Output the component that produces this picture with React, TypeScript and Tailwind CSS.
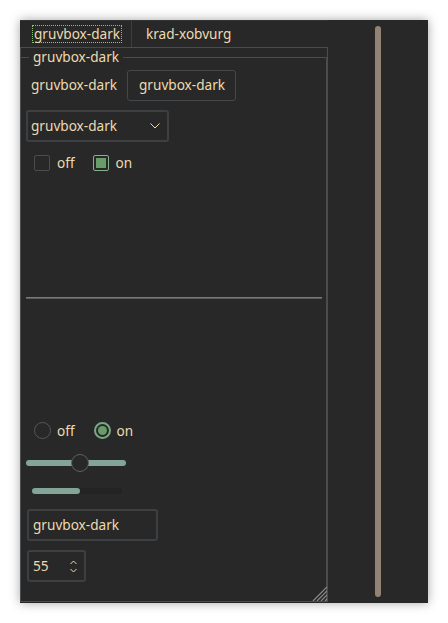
import React from 'react';

const font = { fontFamily: '"Noto Sans", "Open Sans", sans-serif' };

function CheckBox({ checked, label }: { checked?: boolean; label: string }) {
  return (
    <div className="flex items-center h-[16px]">
      <div
        className={`w-[16px] h-[16px] rounded-[2px] border ${
          checked ? 'border-[#83b28a] bg-[#282828] p-[2px]' : 'border-[#4a4d50]'
        }`}
      >
        {checked && <div className="w-full h-full bg-[#689d6a]" />}
      </div>
      <span className="ml-[7px] leading-[16px]">{label}</span>
    </div>
  );
}

function Radio({ checked, label }: { checked?: boolean; label: string }) {
  return (
    <div className="flex items-center h-[17px]">
      <div
        className={`w-[17px] h-[17px] rounded-full flex items-center justify-center ${
          checked ? 'border-2 border-[#79a982]' : 'border-[1.5px] border-[#55585a]'
        }`}
      >
        {checked && <div className="w-[9px] h-[9px] rounded-full bg-[#689d6a]" />}
      </div>
      <span className="ml-[6px] leading-[17px]">{label}</span>
    </div>
  );
}

export default function App() {
  return (
    <div className="w-[448px] h-[623px] bg-white pt-[20px] pl-[20px] text-[13.6px] text-[#ebdbb2]" style={font}>
      <div className="w-[408px] h-[583px] bg-[#282828] shadow-[0_0_10px_rgba(0,0,0,0.35)] flex">
        {/* Left: tabs + pane */}
        <div className="w-[308px] flex flex-col">
          <div className="h-[27px] flex items-stretch border-t border-[#333]">
            <div className="w-[112px] border-r border-[#3e3e3e] flex items-center pl-[12px]">
              <span className="border border-dotted border-[#8ec07c] px-[1px] leading-[16px]">gruvbox-dark</span>
            </div>
            <div className="flex items-center pl-[14px]">krad-xobvurg</div>
          </div>
          <div className="relative flex-1 mb-[1px] border border-[#4a4d50] pt-[9px]">
            <div className="h-full border-t border-r border-[#4a4d50] relative flex flex-col">
              <div className="absolute left-[8px] -top-[10px] px-[4px] bg-[#282828] leading-[18px]">gruvbox-dark</div>

              <div className="mt-[12px] h-[31px] flex items-center">
                <span className="w-[106px] pl-[10px]">gruvbox-dark</span>
                <div className="h-[31px] w-[109px] pl-[11px] flex items-center border border-[#45484b] rounded-[3px]">gruvbox-dark</div>
              </div>

              <div className="mt-[9px] ml-[5px] w-[143px] h-[32px] border-2 border-[#3d4043] rounded-[3px] flex items-center justify-between pl-[3px] pr-[7px]">
                <span>gruvbox-dark</span>
                <svg width="10" height="6" viewBox="0 0 10 6" fill="none" stroke="#ebdbb2" strokeWidth="1">
                  <path d="M0.5 0.5 L5 5 L9.5 0.5" />
                </svg>
              </div>

              <div className="mt-[13px] ml-[13px] flex items-center gap-[18px]">
                <CheckBox label="off" />
                <CheckBox checked label="on" />
              </div>

              <div className="mt-[126px] ml-[5px] w-[296px] h-[2px] bg-[#7a7a7a] border-b border-[#5a5a5a]" />

              <div className="mt-[123px] ml-[13px] flex items-center gap-[19px]">
                <Radio label="off" />
                <Radio checked label="on" />
              </div>

              <div className="mt-[15px] ml-[5px] w-[100px] h-[18px] relative flex items-center">
                <div className="w-full h-[6px] rounded-full bg-[#83a598]" />
                <div className="absolute left-[45px] top-0 w-[18px] h-[18px] rounded-full bg-[#282828] border border-[#5c5f62]" />
              </div>

              <div className="mt-[16px] ml-[11px] w-[90px] h-[6px] rounded-full bg-[#232323] flex">
                <div className="w-[48px] h-full rounded-full bg-[#83a598]" />
              </div>

              <div className="mt-[15px] ml-[6px] w-[131px] h-[32px] border-2 border-[#3d4043] rounded-[3px] flex items-center pl-[4px]">
                gruvbox-dark
              </div>

              <div className="mt-[9px] ml-[6px] w-[59px] h-[32px] border-2 border-[#3d4043] rounded-[3px] flex items-center justify-between pl-[4px] pr-[7px]">
                <span>55</span>
                <svg width="7" height="13" viewBox="0 0 7 13" fill="none" stroke="#ebdbb2" strokeWidth="1">
                  <path d="M0.5 4 L3.5 1 L6.5 4" />
                  <path d="M0.5 9 L3.5 12 L6.5 9" />
                </svg>
              </div>
            </div>
            <svg className="absolute right-0 bottom-0" width="15" height="15" viewBox="0 0 15 15" stroke="#8a8a8a" strokeWidth="1.2">
              <path d="M15 1 L1 15" />
              <path d="M15 5 L5 15" />
              <path d="M15 9 L9 15" />
              <path d="M15 13 L13 15" />
            </svg>
          </div>
        </div>

        {/* Right: scrollbar */}
        <div className="flex-1">
          <div className="ml-[47px] mt-[6px] w-[6px] h-[571px] rounded-full bg-[#928374]" />
        </div>
      </div>
    </div>
  );
}
